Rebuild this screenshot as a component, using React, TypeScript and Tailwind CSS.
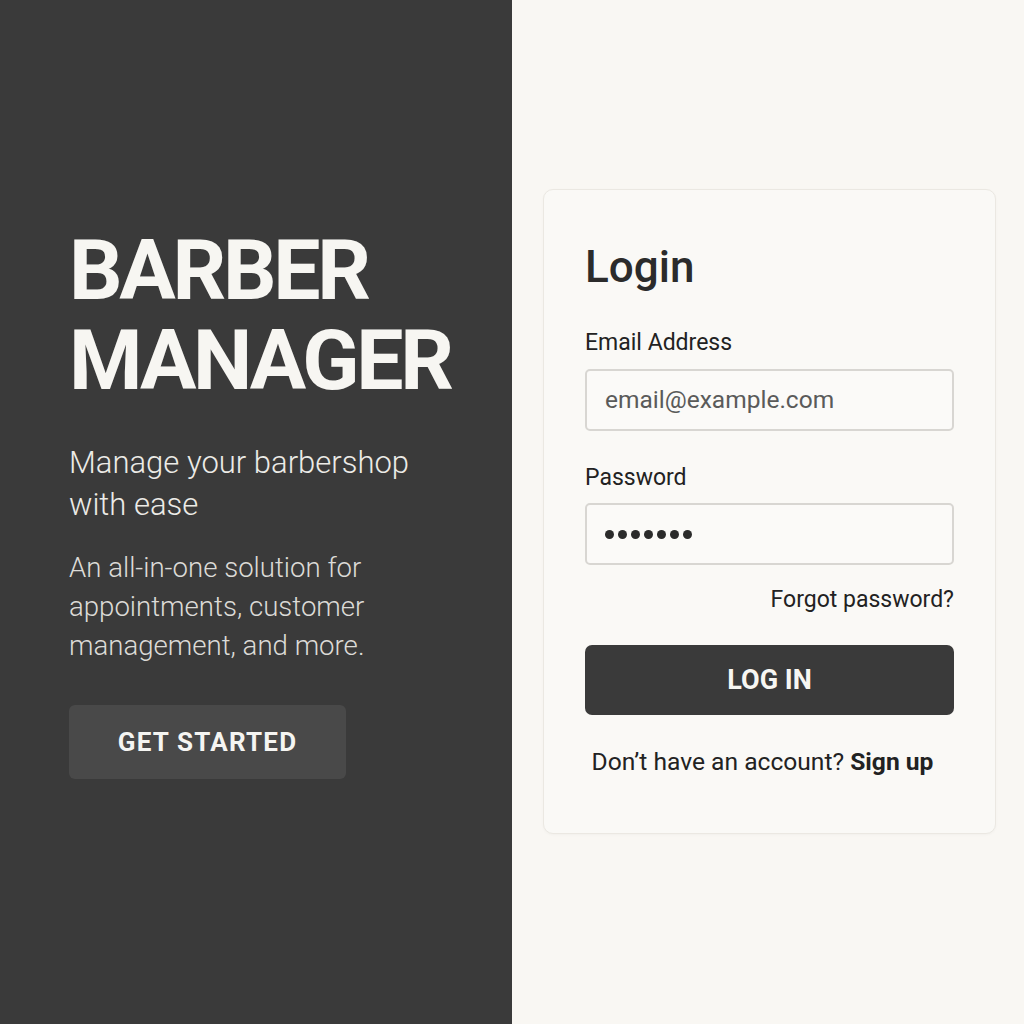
import React from "react";

export default function App() {
  return (
    <div className="flex w-[1024px] h-[1024px] overflow-hidden" style={{ fontFamily: "Roboto, 'Noto Sans', sans-serif" }}>
      <div className="w-[512px] h-full bg-[#3a3a3a] flex flex-col pl-[69px] pt-[226px]">
        <h1 className="text-[84px] leading-[90px] font-bold text-[#f7f6f2] tracking-[-3.3px]">
          BARBER
          <br />
          MANAGER
        </h1>
        <p className="mt-[36px] text-[31px] leading-[42px] text-[#ecebe7] font-light">
          Manage your barbershop
          <br />
          with ease
        </p>
        <p className="mt-[22px] text-[27.6px] leading-[39px] text-[#dcdbd7] font-light">
          An all-in-one solution for
          <br />
          appointments, customer
          <br />
          management, and more.
        </p>
        <button className="mt-[40px] w-[277px] h-[74px] rounded-[6px] bg-[#494949] text-[#f5f5f2] text-[26px] font-bold tracking-[1.2px]">
          GET STARTED
        </button>
      </div>
      <div className="flex-1 h-full bg-[#f9f7f3] pt-[189px] pl-[31px]">
        <div className="w-[453px] h-[645px] rounded-[10px] bg-[#faf9f6] border border-[#ebe8e2] shadow-[0_1px_3px_rgba(0,0,0,0.03)] px-[41px] pt-[49px] flex flex-col">
          <h2 className="text-[44px] leading-[56px] font-medium text-[#2b2b2b]">Login</h2>
          <label className="mt-[33px] text-[23px] leading-[30px] text-[#222]">Email Address</label>
          <div className="mt-[11px] h-[62px] rounded-[5px] border-2 border-[#d8d6d2] bg-[#fbfaf8] flex items-center pl-[18px] text-[24.5px] text-[#5a5a5a]">
            email@example.com
          </div>
          <label className="mt-[32px] text-[23px] leading-[30px] text-[#222]">Password</label>
          <div className="mt-[10px] h-[62px] rounded-[5px] border-2 border-[#d8d6d2] bg-[#fbfaf8] flex items-center pl-[18px] gap-[4px]">
            {Array.from({ length: 7 }).map((_, i) => (
              <span key={i} className="w-[9px] h-[9px] rounded-full bg-[#2b2b2b]" />
            ))}
          </div>
          <div className="mt-[20px] text-right text-[23px] leading-[30px] text-[#222]">Forgot password?</div>
          <button className="mt-[30px] h-[70px] rounded-[7px] bg-[#3a3a3a] text-[#f7f6f2] text-[27px] font-bold">
            LOG IN
          </button>
          <div className="mt-[32px] pr-[14px] text-center text-[24.6px] leading-[30px] text-[#222]">
            Don’t have an account? <span className="font-bold">Sign up</span>
          </div>
        </div>
      </div>
    </div>
  );
}
